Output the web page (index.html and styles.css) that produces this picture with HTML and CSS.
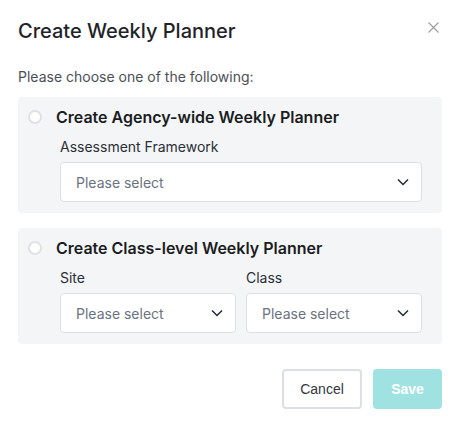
FILE: index.html
```html
<!DOCTYPE html>
<html lang="en">
<head>
    <meta charset="UTF-8">
    <title>Create Weekly Planner</title>
    <link rel="stylesheet" href="styles.css">
</head>
<body>
    <div class="modal">
        <div class="modal-header">
            <h2>Create Weekly Planner</h2>
            <button class="close-btn" aria-label="Close">
                <svg width="11" height="11" viewBox="0 0 11 11"><path d="M0.5 0.5L10.5 10.5M10.5 0.5L0.5 10.5" stroke="#9a9ca3" stroke-width="1.1" fill="none"/></svg>
            </button>
        </div>
        <p class="intro">Please choose one of the following:</p>

        <div class="option">
            <div class="option-title">
                <span class="radio"></span>
                <span>Create Agency-wide Weekly Planner</span>
            </div>
            <div class="fields">
                <div class="field">
                    <label>Assessment Framework</label>
                    <div class="select">
                        <span>Please select</span>
                        <svg width="12" height="8" viewBox="0 0 12 8"><path d="M1 1.5L6 6.5L11 1.5" stroke="#1f2937" stroke-width="1.5" fill="none"/></svg>
                    </div>
                </div>
            </div>
        </div>

        <div class="option">
            <div class="option-title">
                <span class="radio"></span>
                <span>Create Class-level Weekly Planner</span>
            </div>
            <div class="fields">
                <div class="field">
                    <label>Site</label>
                    <div class="select">
                        <span>Please select</span>
                        <svg width="12" height="8" viewBox="0 0 12 8"><path d="M1 1.5L6 6.5L11 1.5" stroke="#1f2937" stroke-width="1.5" fill="none"/></svg>
                    </div>
                </div>
                <div class="field">
                    <label>Class</label>
                    <div class="select">
                        <span>Please select</span>
                        <svg width="12" height="8" viewBox="0 0 12 8"><path d="M1 1.5L6 6.5L11 1.5" stroke="#1f2937" stroke-width="1.5" fill="none"/></svg>
                    </div>
                </div>
            </div>
        </div>

        <div class="actions">
            <button class="btn btn-cancel">Cancel</button>
            <button class="btn btn-save" disabled>Save</button>
        </div>
    </div>
</body>
</html>
```

FILE: styles.css
```css
body {
    margin: 0;
    background-color: #ffffff;
    font-family: 'Inter', 'Liberation Sans', sans-serif;
    color: #1f2329;
}
.modal {
    width: 461px;
    height: 428px;
    box-sizing: border-box;
    padding: 18px 19px 0 18px;
}
.modal-header {
    display: flex;
    justify-content: space-between;
    align-items: flex-start;
}
.modal-header h2 {
    margin: 0;
    font-size: 20px;
    font-weight: 500;
    line-height: 26px;
    color: #1f2329;
}
.close-btn {
    border: none;
    background: none;
    padding: 0;
    margin: 4px 3px 0 0;
    cursor: pointer;
    display: flex;
}
.intro {
    margin: 24px 0 0;
    font-size: 14px;
    line-height: 18px;
    color: #4b4f56;
}
.option {
    background-color: #f4f5f7;
    border-radius: 4px;
    padding: 9px 20px 11px 10px;
    margin-top: 11px;
}
.option + .option {
    margin-top: 15px;
}
.option-title {
    display: flex;
    align-items: center;
    gap: 14px;
    font-size: 16px;
    font-weight: 600;
    line-height: 22px;
    color: #1a1d21;
}
.radio {
    width: 10px;
    height: 10px;
    border: 2px solid #dfe1e6;
    border-radius: 50%;
    background-color: #ffffff;
}
.fields {
    display: flex;
    gap: 10px;
    padding-left: 32px;
    margin-top: 10px;
}
.field {
    flex: 1;
    display: flex;
    flex-direction: column;
}
.field label {
    font-size: 14px;
    line-height: 18px;
    color: #2b2f36;
    margin-bottom: 6px;
}
.select {
    height: 40px;
    box-sizing: border-box;
    border: 1px solid #dcdfe6;
    border-radius: 4px;
    background-color: #ffffff;
    display: flex;
    align-items: center;
    justify-content: space-between;
    padding: 0 12px 0 15px;
    font-size: 14px;
    color: #6b7280;
}
.actions {
    display: flex;
    justify-content: flex-end;
    gap: 11px;
    margin-top: 25px;
}
.btn {
    height: 40px;
    box-sizing: border-box;
    border-radius: 4px;
    font-family: 'Liberation Sans', Arial, sans-serif;
    font-size: 14px;
    cursor: pointer;
}
.btn-cancel {
    width: 80px;
    background-color: #ffffff;
    border: 2px solid #dcdfe6;
    color: #33373d;
}
.btn-save {
    width: 69px;
    border: none;
    background-color: #a0e1e1;
    color: #ffffff;
    font-weight: 700;
}
```
